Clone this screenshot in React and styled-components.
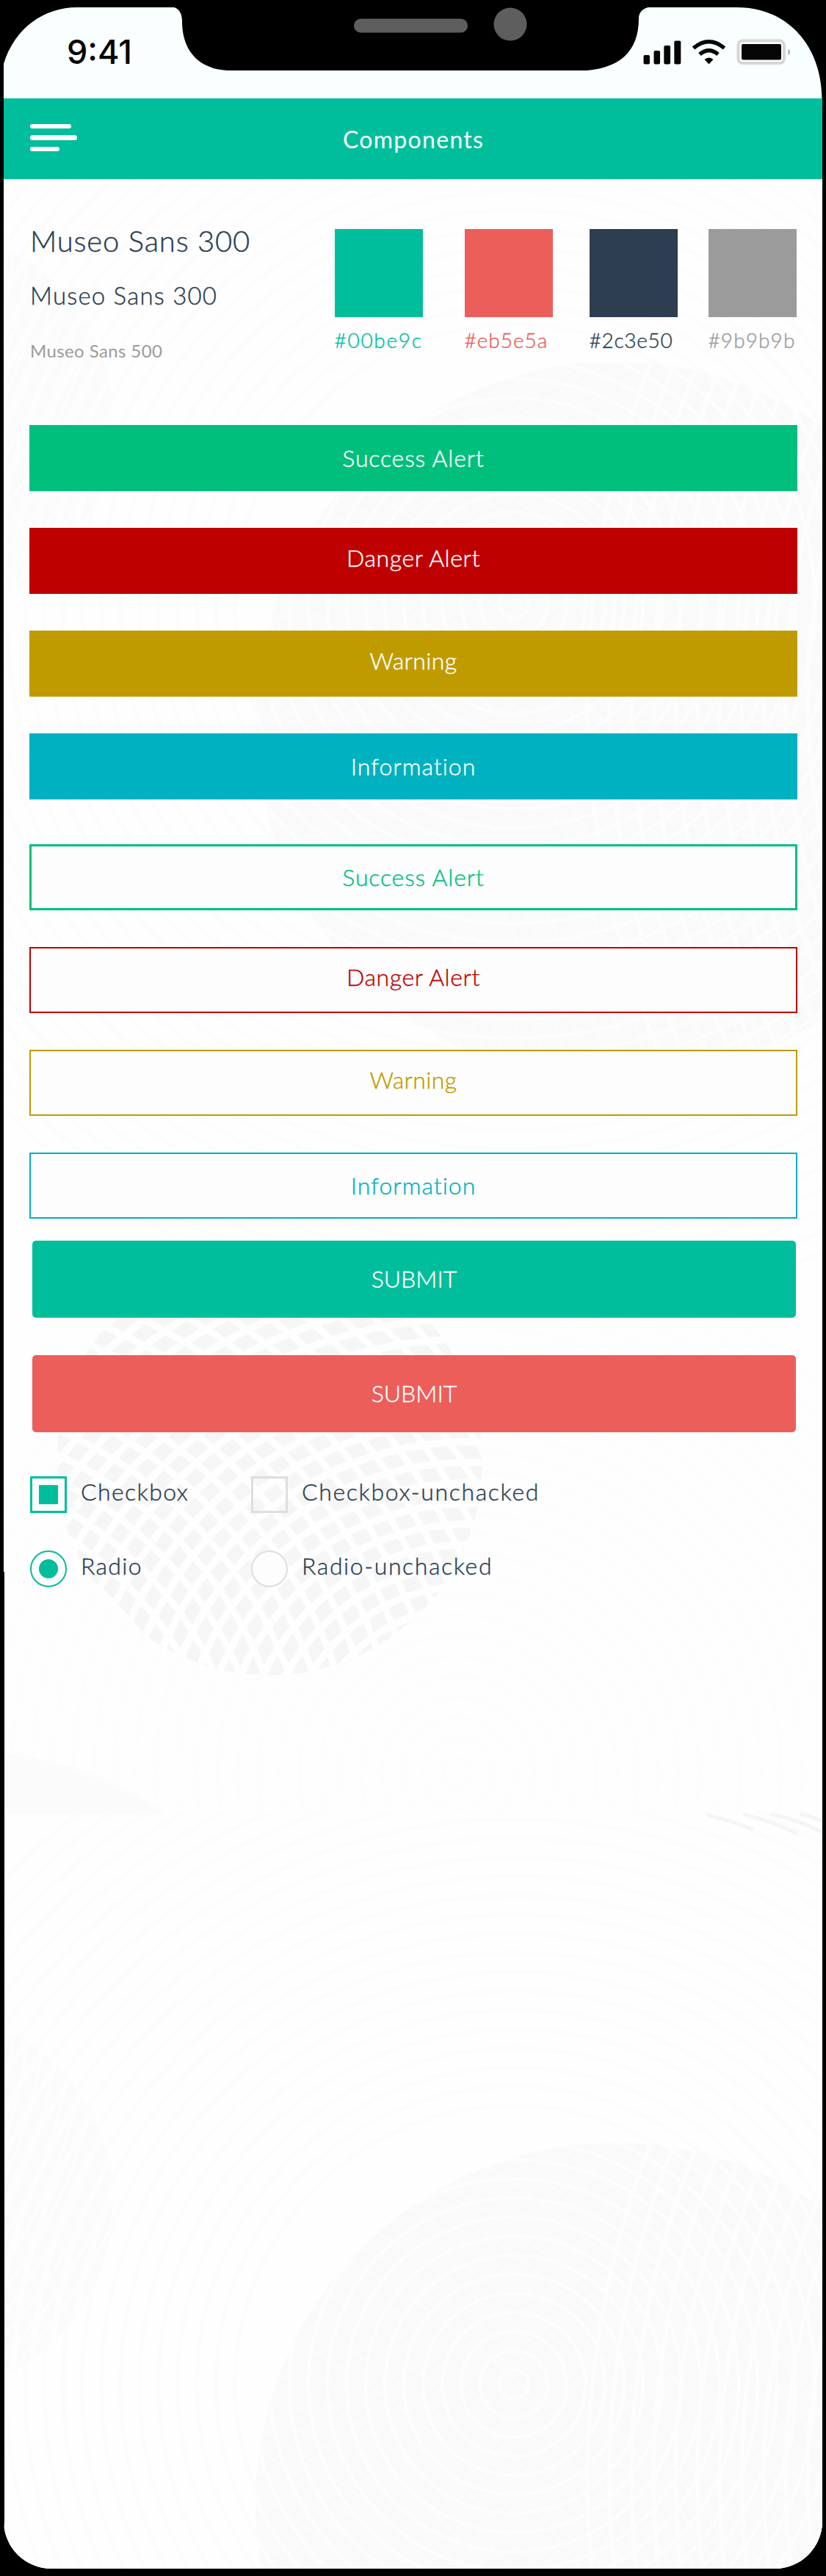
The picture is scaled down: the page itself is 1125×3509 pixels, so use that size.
import React from "react";
import styled, { createGlobalStyle } from "styled-components";

const palette = {
  teal: "#00be9c",
  coral: "#eb5e5a",
  navy: "#2c3e50",
  gray: "#9b9b9b",
  success: "#00bf7c",
  danger: "#bf0000",
  warning: "#bf9b00",
  info: "#00b1bf",
};

const GlobalStyle = createGlobalStyle`
  *, *::before, *::after { box-sizing: border-box; }
  body {
    margin: 0;
    background: #000;
    font-family: Lato, "Open Sans", sans-serif;
    font-weight: 300;
    font-variant-ligatures: none;
    color: ${palette.navy};
  }
`;

const Device = styled.div`
  width: 1125px;
  height: 3509px;
  padding: 10px 5px;
  background: #000;
`;

const Screen = styled.main`
  position: relative;
  isolation: isolate;
  height: 3489px;
  overflow: hidden;
  display: flex;
  flex-direction: column;
  background: #fefefe;
  border-radius: 0 0 65px 65px;
`;

const Backdrop = styled.svg`
  position: absolute;
  inset: 0;
  z-index: -1;
`;

const StatusBar = styled.div`
  position: relative;
  flex: none;
  height: 124px;
  display: flex;
  justify-content: space-between;
  align-items: flex-start;
  padding: 43px 42px 0 86px;
  background: #f9fefe;
`;

const Bezel = styled.svg`
  position: absolute;
  left: 0;
  top: 0;
`;

const Clock = styled.time`
  position: relative;
  font: 500 45px/36px Inter, sans-serif;
  letter-spacing: 0;
  color: #050505;
`;

const StatusIcons = styled.svg`
  position: relative;
  flex: none;
`;

const Header = styled.header`
  flex: none;
  height: 110px;
  display: grid;
  grid-template-columns: 64px 1fr 64px;
  align-items: center;
  padding: 0 36px;
  background: ${palette.teal};
`;

const MenuButton = styled.button`
  display: flex;
  flex-direction: column;
  gap: 9.4px;
  margin: 0;
  padding: 0 0 3px;
  border: 0;
  background: none;
`;

const MenuLine = styled.span`
  width: ${(p) => p.$width}px;
  height: 6.2px;
  border-radius: 4px;
  background: #fff;
`;

const Title = styled.h1`
  margin: 0;
  padding-top: 2px;
  text-align: center;
  font-size: 32px;
  line-height: 40px;
  font-weight: 400;
  letter-spacing: 1.3px;
  text-indent: 1.2px;
  color: #fff;
`;

const Content = styled.div`
  display: flex;
  flex-direction: column;
  padding: 68px 34px 0 35px;
  -webkit-text-stroke: 0.4px currentColor;
`;

const Intro = styled.section`
  display: flex;
  justify-content: space-between;
  height: 267px;
`;

const TypeSamples = styled.div`
  display: flex;
  flex-direction: column;
  padding-left: 1px;
`;

const Sample = styled.p`
  margin: 0 0 ${(p) => p.$after}px;
  font-size: ${(p) => p.$size}px;
  line-height: ${(p) => p.$line}px;
  font-weight: ${(p) => p.$weight || 300};
  letter-spacing: ${(p) => p.$track}px;
  color: ${(p) => p.$color || palette.navy};
  white-space: nowrap;
  -webkit-text-stroke-width: ${(p) => (p.$weight ? 0 : 0.4)}px;
`;

const Swatches = styled.div`
  display: grid;
  grid-template-columns: 177px 170px 162px 120px;
  padding-right: 1px;
`;

const Swatch = styled.figure`
  margin: 0;
  width: 120px;
  color: ${(p) => p.$color};

  &::before {
    content: "";
    display: block;
    height: 120px;
    background: currentColor;
  }
`;

const SwatchName = styled.figcaption`
  padding-top: 13px;
  margin-left: -0.5px;
  font-size: 28px;
  line-height: 36px;
  letter-spacing: ${(p) => p.$track}px;
  white-space: nowrap;
`;

const AlertList = styled.section`
  display: flex;
  flex-direction: column;
  gap: 50px;
  margin-bottom: ${(p) => p.$after}px;
`;

const Alert = styled.div`
  display: flex;
  align-items: center;
  justify-content: center;
  height: 90px;
  padding-bottom: ${(p) => p.$lift}px;
  border: ${(p) => p.$stroke || 2}px solid ${(p) => p.$color};
  background: ${(p) => (p.$outline ? "#fdfdfd" : p.$color)};
  color: ${(p) => (p.$outline ? p.$color : "#fff")};
  font-size: 32px;
  line-height: 40px;
  letter-spacing: ${(p) => p.$track}px;
`;

const Submit = styled.button`
  height: 105px;
  margin: 0 2px 51px 4px;
  padding: 0 0 2px;
  border: 0;
  border-radius: 5px;
  background: ${(p) => p.$color};
  color: #fff;
  font: 300 32px/40px Lato, sans-serif;
  letter-spacing: 0;
`;

const Options = styled.section`
  display: grid;
  grid-template-columns: 301px auto;
  grid-auto-rows: 50px;
  row-gap: 51px;
  padding: 9px 0 0 1px;
`;

const Option = styled.label`
  display: flex;
  align-items: center;
  gap: 19px;
  font-size: 32px;
  line-height: 40px;
  letter-spacing: ${(p) => p.$track}px;
  white-space: nowrap;
`;

const Control = styled.span`
  display: grid;
  place-items: center;
  width: 50px;
  height: 50px;
  border: ${(p) => (p.$round ? 2 : 3)}px solid ${(p) => (p.$on ? palette.teal : "#dedede")};
  border-radius: ${(p) => (p.$round ? "50%" : "0")};
  background: ${(p) => (p.$on || p.$round ? "#fdfdfd" : "transparent")};

  &::after {
    content: "";
    width: 26px;
    height: 26px;
    border-radius: inherit;
    background: ${(p) => (p.$on ? palette.teal : "transparent")};
  }
`;

const OptionText = styled.span`
  padding-bottom: 8px;
`;

const rings = (cx, cy, from, to, step, props) =>
  Array.from({ length: Math.floor((to - from) / step) + 1 }, (_, i) => (
    <circle key={`${cx}-${i}`} cx={cx} cy={cy} r={from + i * step} fill="none" {...props} />
  ));

function Waves() {
  return (
    <Backdrop width="1115" height="3489" viewBox="5 10 1115 3489">
      <defs>
        <clipPath id="large"><circle cx="839" cy="984" r="491" /></clipPath>
        <clipPath id="mesh"><circle cx="367" cy="1992" r="290" /></clipPath>
        <clipPath id="side"><circle cx="-110" cy="574" r="264" /></clipPath>
        <clipPath id="tile"><rect x="0" y="44" width="1125" height="2426" /></clipPath>
        <g id="field" clipPath="url(#tile)">
          {rings(700, 822, 380, 1000, 26, { stroke: "#fcfcfc", strokeWidth: 6 })}
          <circle cx="839" cy="984" r="491" fill="#fafafa" />
          <g clipPath="url(#large)">
            {rings(700, 822, 20, 700, 26, { stroke: "#fdfdfd", strokeWidth: 5 })}
            {rings(2050, 950, 950, 1250, 30, { stroke: "#fdfdfd", strokeWidth: 6 })}
            {rings(-100, 1700, 700, 1500, 26, { stroke: "#fcfcfc", strokeWidth: 3 })}
          </g>
          <circle cx="-110" cy="574" r="264" fill="#fbfbfb" />
          <g clipPath="url(#side)">
            {rings(700, 822, 500, 1000, 26, { stroke: "#fdfdfd", strokeWidth: 8 })}
            {rings(-500, 300, 300, 800, 20, { stroke: "#fdfdfd", strokeWidth: 5 })}
          </g>
        </g>
      </defs>
      <use href="#field" />
      {rings(624, 2416, 20, 720, 28, { stroke: "#fdfdfd", strokeWidth: 7 })}
      <circle cx="367" cy="1992" r="290" fill="#f6f6f6" />
      <g clipPath="url(#mesh)">
        {rings(640, 2416, 200, 1000, 28, { stroke: "#fefefe", strokeWidth: 10 })}
        {rings(-150, 2480, 300, 1150, 31, { stroke: "#fefefe", strokeWidth: 9 })}
      </g>
      <rect x="5" y="2470" width="1115" height="1030" fill="#fefefe" />
      <path d="M5 2388Q120 2400 225 2470H5Z" fill="#fbfbfb" />
      <use href="#field" y="2426" />
      <g fill="none" stroke="#f5f5f5" strokeWidth="5">
        <path d="M962 2472Q998 2481 1026 2492" />
        <path d="M1012 2471Q1055 2482 1086 2498" />
        <path d="M1050 2471Q1090 2480 1122 2497" />
        <path d="M1090 2471Q1110 2475 1122 2482" />
      </g>
      <rect x="5" y="2141" width="1" height="1358" fill="#000" />
    </Backdrop>
  );
}

function Notch() {
  return (
    <Bezel width="1115" height="124" viewBox="5 10 1115 124">
      <path d="M0 10H105C60 10 20 38 5 87H0Z" />
      <path d="M1125 10H1003C1075 10 1119 65 1119.500 134H1125Z" />
      <path d="M232 9C243 10 248 17 248 29C248 73 275 96 315 96H800C842 92 870 72 870 25C870 16 877 10 888 9Z" />
      <rect x="482" y="25.500" width="155" height="19" rx="9.500" fill="#5e5e5e" />
      <circle cx="695" cy="33" r="22.500" fill="#5e5e5e" />
    </Bezel>
  );
}

function StatusGlyphs() {
  return (
    <StatusIcons width="202" height="36" viewBox="876 52 202 36">
      <g fill="#050505">
        <rect x="876.500" y="74" width="8.500" height="12.500" rx="2" />
        <rect x="890.500" y="68" width="8.500" height="18.500" rx="2" />
        <rect x="904.300" y="61" width="8.700" height="25.500" rx="2" />
        <rect x="918.300" y="54.500" width="9" height="32" rx="2" />
      </g>
      <g fill="none" stroke="#050505" strokeWidth="5.500">
        <path d="M944.500 64.500Q965.500 47 986.500 64.500" />
        <path d="M953 73Q965.500 62.500 978 73" />
      </g>
      <path d="M959.500 80Q965.500 75 971.500 80L965.500 86.500Z" fill="#050505" />
      <rect x="1005.500" y="54.500" width="62.500" height="30.500" rx="6" fill="#fff" stroke="#d9d5d5" strokeWidth="4" />
      <rect x="1010" y="59" width="54" height="21.500" rx="2" fill="#050505" />
      <path d="M1074 66.500Q1077.500 70 1074 73.500Z" fill="#aaa" stroke="#aaa" />
    </StatusIcons>
  );
}

const swatches = [
  { name: "#00be9c", color: palette.teal, track: 1.7 },
  { name: "#eb5e5a", color: palette.coral, track: 1 },
  { name: "#2c3e50", color: palette.navy, track: 0.7 },
  { name: "#9b9b9b", color: palette.gray, track: 1.1 },
];

const alerts = [
  { text: "Success Alert", color: palette.success, lift: 1, stroke: 3, track: 0.85 },
  { text: "Danger Alert", color: palette.danger, lift: 8, track: 0.6 },
  { text: "Warning", color: palette.warning, lift: 8, track: 0.4 },
  { text: "Information", color: palette.info, lift: 1, track: 1 },
];

export default function App() {
  return (
    <>
      <GlobalStyle />
      <Device>
        <Screen>
          <Waves />
          <StatusBar>
            <Notch />
            <Clock>9:41</Clock>
            <StatusGlyphs />
          </StatusBar>
          <Header>
            <MenuButton aria-label="Menu">
              <MenuLine $width={56} />
              <MenuLine $width={63.5} />
              <MenuLine $width={40} />
            </MenuButton>
            <Title>Components</Title>
          </Header>
          <Content>
            <Intro>
              <TypeSamples>
                <Sample $size={40} $line={32} $after={42} $track={0.8}>Museo Sans 300</Sample>
                <Sample $size={33} $line={32} $after={44} $track={1.2}>Museo Sans 300</Sample>
                <Sample $size={24} $line={32} $after={0} $track={0.4} $weight={400} $color={palette.gray}>
                  Museo Sans 500
                </Sample>
              </TypeSamples>
              <Swatches>
                {swatches.map((s) => (
                  <Swatch key={s.name} $color={s.color}>
                    <SwatchName $track={s.track}>{s.name}</SwatchName>
                  </Swatch>
                ))}
              </Swatches>
            </Intro>
            <AlertList $after={61}>
              {alerts.map((a) => (
                <Alert key={a.text} $color={a.color} $lift={a.lift} $track={a.track}>{a.text}</Alert>
              ))}
            </AlertList>
            <AlertList $after={30}>
              {alerts.map((a) => (
                <Alert key={a.text} $outline $color={a.color} $lift={a.lift} $stroke={a.stroke} $track={a.track}>
                  {a.text}
                </Alert>
              ))}
            </AlertList>
            <Submit $color={palette.teal}>SUBMIT</Submit>
            <Submit $color={palette.coral}>SUBMIT</Submit>
            <Options>
              <Option $track={1.4}><Control $on /><OptionText>Checkbox</OptionText></Option>
              <Option $track={1.65}><Control /><OptionText>Checkbox-unchacked</OptionText></Option>
              <Option $track={1.3}><Control $on $round /><OptionText>Radio</OptionText></Option>
              <Option $track={1.6}><Control $round /><OptionText>Radio-unchacked</OptionText></Option>
            </Options>
          </Content>
        </Screen>
      </Device>
    </>
  );
}
